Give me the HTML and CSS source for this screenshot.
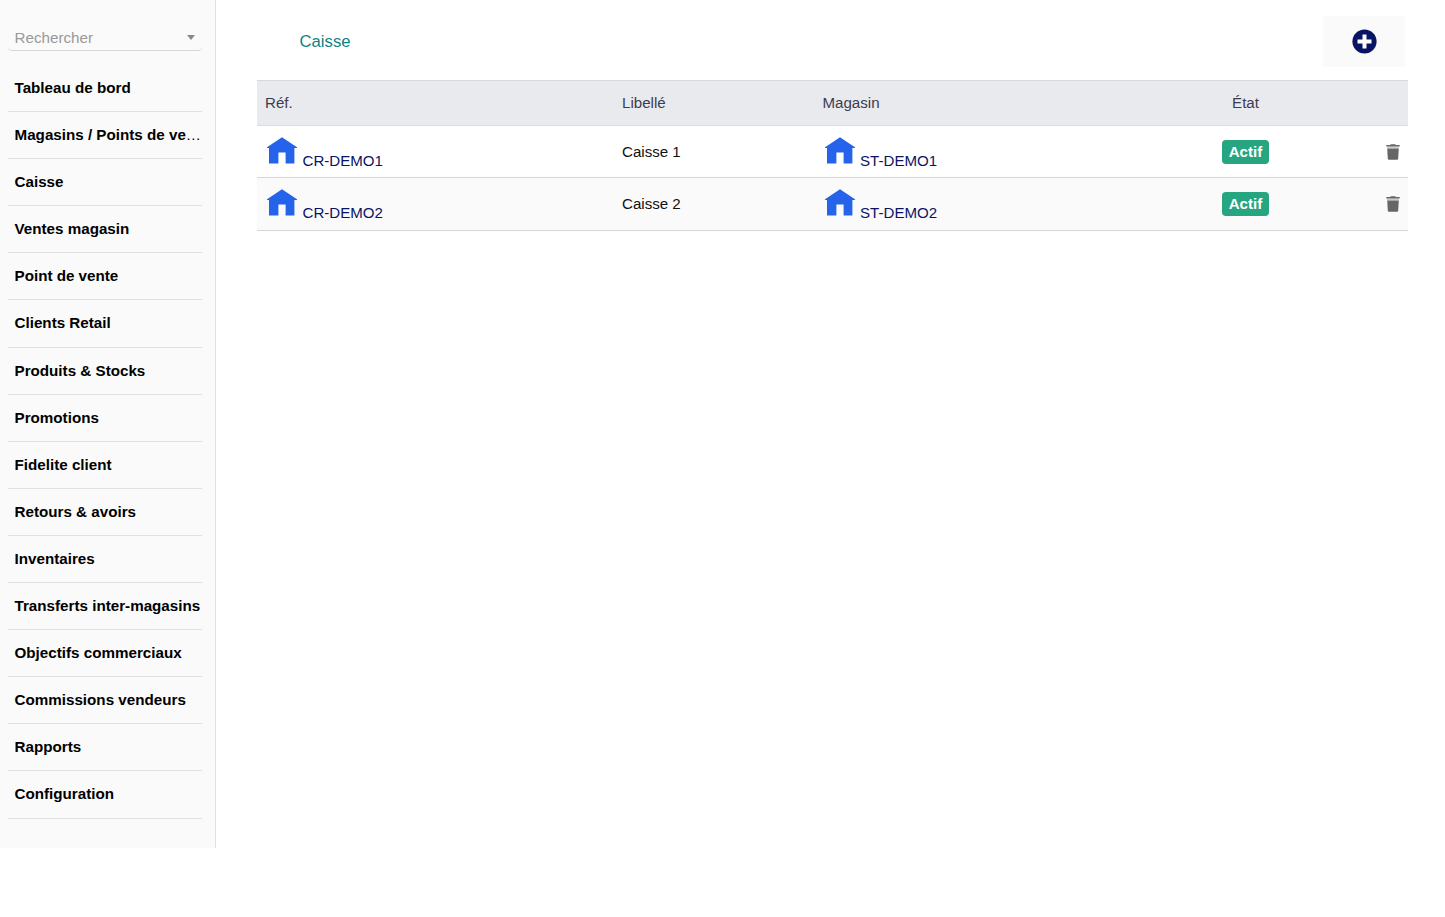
FILE: index.html
```html
<!DOCTYPE html>
<html lang="fr">
<head>
  <meta charset="utf-8">
  <title>Caisse</title>
  <link rel="stylesheet" href="styles.css">
</head>
<body>
  <svg class="sprite" width="0" height="0">
    <symbol id="house" viewBox="0 0 30 27">
      <path d="M15 0.2 L30 10.2 V11 H27.4 V26.4 H18.600 V15.4 H11.400 V26.4 H2 V11 H0 V10.2 Z"/>
    </symbol>
    <symbol id="trash" viewBox="0 0 14 16">
      <path d="M4.200 1 L4.800 0.300 H9.200 L9.800 1 H13.700 V2.600 H0.300 V1 Z"/>
      <path d="M1.200 2.600 H12.800 V4.400 H1.200 Z" opacity="0.35"/>
      <path d="M1.200 4.400 H12.800 L12.200 14.500 Q12.100 15.700 11 15.700 H3 Q1.900 15.700 1.800 14.500 Z"/>
    </symbol>
  </svg>

  <div class="page">
    <aside class="sidebar">
      <div class="search">
        <span>Rechercher</span>
        <i class="caret"></i>
      </div>
      <ul class="menu">
        <li><a>Tableau de bord</a></li>
        <li><a>Magasins / Points de ve</a>…</li>
        <li><a>Caisse</a></li>
        <li><a>Ventes magasin</a></li>
        <li><a>Point de vente</a></li>
        <li><a>Clients Retail</a></li>
        <li><a>Produits &amp; Stocks</a></li>
        <li><a>Promotions</a></li>
        <li><a>Fidelite client</a></li>
        <li><a>Retours &amp; avoirs</a></li>
        <li><a>Inventaires</a></li>
        <li><a>Transferts inter-magasins</a></li>
        <li><a>Objectifs commerciaux</a></li>
        <li><a>Commissions vendeurs</a></li>
        <li><a>Rapports</a></li>
        <li><a>Configuration</a></li>
      </ul>
    </aside>

    <main class="content">
      <div class="title-bar">
        <div class="title">Caisse</div>
        <a class="btn-add">
          <svg width="25" height="25" viewBox="0 0 25 25">
            <circle cx="12.500" cy="12.500" r="12.100"/>
            <path d="M12.500 5.500V19.500M5.500 12.500H19.500"/>
          </svg>
        </a>
      </div>

      <table class="list">
        <colgroup>
          <col class="col-ref">
          <col class="col-label">
          <col class="col-store">
          <col class="col-status">
          <col class="col-action">
        </colgroup>
        <thead>
          <tr>
            <th>Réf.</th>
            <th>Libellé</th>
            <th>Magasin</th>
            <th class="center">État</th>
            <th></th>
          </tr>
        </thead>
        <tbody>
          <tr>
            <td><a class="ref"><svg class="house"><use href="#house"/></svg><span>CR-DEMO1</span></a></td>
            <td>Caisse 1</td>
            <td><a class="ref"><svg class="house"><use href="#house"/></svg><span>ST-DEMO1</span></a></td>
            <td class="center"><span class="badge">Actif</span></td>
            <td class="right"><svg class="trash"><use href="#trash"/></svg></td>
          </tr>
          <tr>
            <td><a class="ref"><svg class="house"><use href="#house"/></svg><span>CR-DEMO2</span></a></td>
            <td>Caisse 2</td>
            <td><a class="ref"><svg class="house"><use href="#house"/></svg><span>ST-DEMO2</span></a></td>
            <td class="center"><span class="badge">Actif</span></td>
            <td class="right"><svg class="trash"><use href="#trash"/></svg></td>
          </tr>
        </tbody>
      </table>
    </main>
  </div>
</body>
</html>
```
FILE: styles.css
```css
* {
  box-sizing: border-box;
}
body {
  margin: 0;
  background: #fff;
  color: #111;
  font-family: Arial, "Liberation Sans", sans-serif;
  font-size: 15.1px;
}
.sprite {
  display: none;
}
.page {
  display: flex;
  align-items: flex-start;
}

/* left menu */
.sidebar {
  width: 216px;
  height: 848px;
  padding: 22px 13px 0 8px;
  background: #fafafa;
  border-right: 1px solid #e0e0e0;
  font-size: 15.2px;
}
.search {
  display: flex;
  align-items: center;
  justify-content: space-between;
  height: 29px;
  padding: 2px 7px 0 6.5px;
  border-bottom: 1px solid #d8d8d8;
  border-radius: 4px;
  color: #999;
}
.caret {
  border: 4.500px solid transparent;
  border-top: 5px solid #888;
  border-bottom: 0;
}
.menu {
  list-style: none;
  margin: 14px 0 0;
  padding: 0;
}
.menu li {
  height: 47.1px;
  padding-left: 6.500px;
  border-bottom: 1px solid #e0e0e0;
  line-height: 45.500px;
  white-space: nowrap;
  color: #000;
}
.menu a {
  font-weight: bold;
}

/* page content */
.content {
  flex: 1;
  padding: 16px 37px 0 41px;
}
.title-bar {
  display: flex;
  align-items: center;
  justify-content: space-between;
  height: 51px;
  margin-bottom: 13px;
  padding: 0 3px 0 42.500px;
}
.title {
  color: #108383;
  font-size: 16.700px;
}
.btn-add {
  display: flex;
  align-items: center;
  justify-content: center;
  width: 82px;
  height: 51px;
  background: #fafafa;
}
.btn-add circle {
  fill: #0a1464;
}
.btn-add path {
  stroke: #fff;
  stroke-width: 4;
}

.list {
  width: 1151px;
  table-layout: fixed;
  border-collapse: separate;
  border-spacing: 0;
  border-top: 1px solid #d8d8d8;
}
.col-ref { width: 357px; }
.col-label { width: 200.500px; }
.col-store { width: 345px; }
.col-status { width: 172px; }
.list th {
  height: 45px;
  padding: 0 8px 2px;
  background: #e9eaed;
  border-bottom: 1px solid #dcdcdc;
  color: #3c3c50;
  font-weight: normal;
  text-align: left;
}
.list td {
  height: 52px;
  padding: 0 8px;
  border-bottom: 1px solid #d8d8d8;
}
.list tbody tr:nth-child(even) td {
  height: 53px;
  padding-bottom: 1px;
  background: #fafafa;
}
.list .center {
  text-align: center;
}
.list .right {
  text-align: right;
}
.ref {
  display: flex;
  align-items: flex-end;
  gap: 5.500px;
  padding: 0 0 2px 2px;
  color: #0a1464;
}
.ref span {
  line-height: 17px;
  margin-bottom: -5px;
}
.house {
  width: 30px;
  height: 27px;
  fill: #2563eb;
}
.trash {
  display: block;
  width: 14px;
  height: 16px;
  margin-left: auto;
  fill: #666;
}
.badge {
  display: inline-block;
  width: 47px;
  height: 24px;
  border-radius: 4px;
  background: #25a580;
  color: #fff;
  font-weight: bold;
  line-height: 24px;
}
```
